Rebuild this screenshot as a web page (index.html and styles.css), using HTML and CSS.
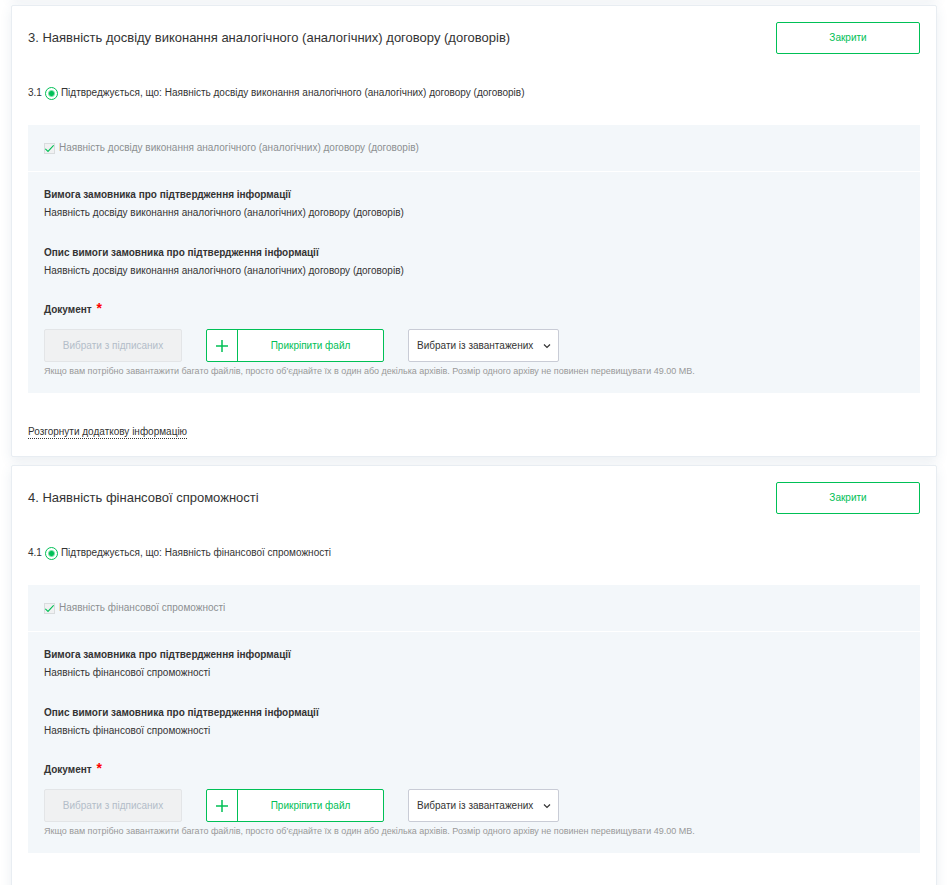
FILE: index.html
```html
<!DOCTYPE html>
<html lang="uk">
<head>
<meta charset="utf-8">
<title>Критерії</title>
<link rel="stylesheet" href="styles.css">
</head>
<body>
<main class="page">
  <div class="card card-edge"></div>

  <section class="card">
    <header class="card-head">
      <h2 class="card-title">3. Наявність досвіду виконання аналогічного (аналогічних) договору (договорів)</h2>
      <button class="btn btn-close" type="button">Закрити</button>
    </header>
    <div class="option">
      <span>3.1</span>
      <input class="radio" type="radio" id="r3" name="criterion3" checked>
      <label for="r3">Підтвреджується, що: Наявність досвіду виконання аналогічного (аналогічних) договору (договорів)</label>
    </div>
    <div class="panel">
      <div class="panel-head">
        <input class="check" type="checkbox" id="c3" checked disabled>
        <label for="c3">Наявність досвіду виконання аналогічного (аналогічних) договору (договорів)</label>
      </div>
      <div class="panel-body">
        <div class="field">
          <h3 class="field-title">Вимога замовника про підтвердження інформації</h3>
          <p class="field-text">Наявність досвіду виконання аналогічного (аналогічних) договору (договорів)</p>
        </div>
        <div class="field">
          <h3 class="field-title">Опис вимоги замовника про підтвердження інформації</h3>
          <p class="field-text">Наявність досвіду виконання аналогічного (аналогічних) договору (договорів)</p>
        </div>
        <label class="doc-title" for="s3">Документ <span class="required">*</span></label>
        <div class="actions">
          <button class="btn btn-signed" type="button" disabled>Вибрати з підписаних</button>
          <button class="btn btn-attach" type="button">
            <span class="plus"><svg width="12" height="12" viewBox="0 0 12 12"><path d="M6 0v12M0 6h12"/></svg></span>
            <span class="attach-text">Прикріпити файл</span>
          </button>
          <div class="picker">
            <select class="select" id="s3"><option>Вибрати із завантажених</option></select>
            <svg class="chevron" width="8" height="6" viewBox="0 0 8 6"><path d="M1 1.5l3 3 3-3"/></svg>
          </div>
        </div>
        <p class="hint">Якщо вам потрібно завантажити багато файлів, просто об'єднайте їх в один або декілька архівів. Розмір одного архіву не повинен перевищувати 49.00 MB.</p>
      </div>
    </div>
    <a class="more" href="#more">Розгорнути додаткову інформацію</a>
  </section>

  <section class="card card-last">
    <header class="card-head">
      <h2 class="card-title">4. Наявність фінансової спроможності</h2>
      <button class="btn btn-close" type="button">Закрити</button>
    </header>
    <div class="option">
      <span>4.1</span>
      <input class="radio" type="radio" id="r4" name="criterion4" checked>
      <label for="r4">Підтвреджується, що: Наявність фінансової спроможності</label>
    </div>
    <div class="panel">
      <div class="panel-head">
        <input class="check" type="checkbox" id="c4" checked disabled>
        <label for="c4">Наявність фінансової спроможності</label>
      </div>
      <div class="panel-body">
        <div class="field">
          <h3 class="field-title">Вимога замовника про підтвердження інформації</h3>
          <p class="field-text">Наявність фінансової спроможності</p>
        </div>
        <div class="field">
          <h3 class="field-title">Опис вимоги замовника про підтвердження інформації</h3>
          <p class="field-text">Наявність фінансової спроможності</p>
        </div>
        <label class="doc-title" for="s4">Документ <span class="required">*</span></label>
        <div class="actions">
          <button class="btn btn-signed" type="button" disabled>Вибрати з підписаних</button>
          <button class="btn btn-attach" type="button">
            <span class="plus"><svg width="12" height="12" viewBox="0 0 12 12"><path d="M6 0v12M0 6h12"/></svg></span>
            <span class="attach-text">Прикріпити файл</span>
          </button>
          <div class="picker">
            <select class="select" id="s4"><option>Вибрати із завантажених</option></select>
            <svg class="chevron" width="8" height="6" viewBox="0 0 8 6"><path d="M1 1.5l3 3 3-3"/></svg>
          </div>
        </div>
        <p class="hint">Якщо вам потрібно завантажити багато файлів, просто об'єднайте їх в один або декілька архівів. Розмір одного архіву не повинен перевищувати 49.00 MB.</p>
      </div>
    </div>
  </section>
</main>
</body>
</html>
```
FILE: styles.css
```css
* {
  box-sizing: border-box;
}

body {
  margin: 0;
  background: #fff;
  color: #333;
  font-family: "Liberation Sans", Arial, sans-serif;
  font-size: 10px;
  line-height: 16px;
}

h2, h3, p {
  margin: 0;
}

button, select, input {
  margin: 0;
  font: inherit;
}

.page {
  display: flex;
  flex-direction: column;
  gap: 8px;
  height: 100vh;
  padding: 0 11px;
  overflow: hidden;
}

.card {
  flex: none;
  padding: 16px;
  border: 1px solid #e8edf2;
  border-radius: 2px;
  background: #fff;
  box-shadow: 0 4px 12px rgba(50, 90, 130, 0.1);
}

.card-edge {
  height: 8px;
  margin-top: -11px;
  padding: 0;
}

.card-last {
  padding-bottom: 64px;
}

.card-head {
  display: flex;
  align-items: center;
  justify-content: space-between;
}

.card-title {
  font-size: 13px;
  font-weight: 400;
}

.btn {
  border: 1px solid #00c056;
  border-radius: 2px;
  background: #fff;
  color: #00c056;
}

.btn-close {
  width: 144px;
  height: 32px;
}

.option {
  display: flex;
  align-items: center;
  gap: 3px;
  margin: 30px 0 23px;
  line-height: 18px;
}

.radio {
  width: 13px;
  height: 13px;
  border: 1px solid #00c056;
  border-radius: 50%;
  appearance: none;
  background: radial-gradient(circle, #00c056 0 2px, #fff 4px);
}

.panel-head {
  display: flex;
  align-items: center;
  gap: 4px;
  height: 46px;
  padding: 0 16px;
  background: #f3f7fa;
  color: #8c8f91;
}

.check {
  width: 11px;
  height: 11px;
  border: 1px solid #d9dcde;
  appearance: none;
  background: #f0f1f2 url("data:image/svg+xml,%3Csvg xmlns='http://www.w3.org/2000/svg' viewBox='0 0 9 9'%3E%3Cpath d='M.3 4.8l2.700 2.700L8.700 1.300' fill='none' stroke='%2300c056' stroke-width='1.200'/%3E%3C/svg%3E") center / 9px 9px no-repeat;
}

.panel-body {
  margin-top: 1px;
  padding: 14px 16px 13px;
  background: #f3f7fa;
}

.field {
  margin-bottom: 22px;
}

.field-title {
  font-size: 10px;
  font-weight: 700;
  line-height: 18px;
}

.field-text {
  line-height: 18px;
}

.doc-title {
  display: block;
  font-weight: 700;
  line-height: 16px;
}

.required {
  margin-left: 2px;
  color: #f00;
  font-size: 14px;
  line-height: 0;
}

.actions {
  display: flex;
  gap: 24px;
  margin-top: 11px;
}

.btn-signed {
  width: 138px;
  height: 33px;
  border-color: #e3e5e7;
  background: #f0f1f2;
  color: #b3bdc9;
}

.btn-attach {
  display: flex;
  width: 178px;
  height: 33px;
  padding: 0;
}

.plus {
  display: flex;
  align-items: center;
  justify-content: center;
  align-self: stretch;
  width: 31px;
  border-right: 1px solid #00c056;
}

.plus path {
  stroke: #00c056;
  stroke-width: 1.5;
}

.attach-text {
  flex: 1;
  align-self: center;
}

.picker {
  position: relative;
}

.select {
  width: 151px;
  height: 33px;
  padding: 0 8px;
  border: 1px solid #c9ccd6;
  border-radius: 2px;
  appearance: none;
  background: #fff;
  color: #333;
}

.chevron {
  position: absolute;
  top: 14px;
  right: 8px;
  pointer-events: none;
}

.chevron path {
  fill: none;
  stroke: #333;
  stroke-width: 1.2;
}

.hint {
  color: #999;
  font-size: 9px;
  line-height: 18px;
}

.more {
  display: inline-block;
  margin: 32px 0 1px;
  border-bottom: 1px dotted #333;
  color: #333;
  line-height: 13px;
  text-decoration: none;
}
```
